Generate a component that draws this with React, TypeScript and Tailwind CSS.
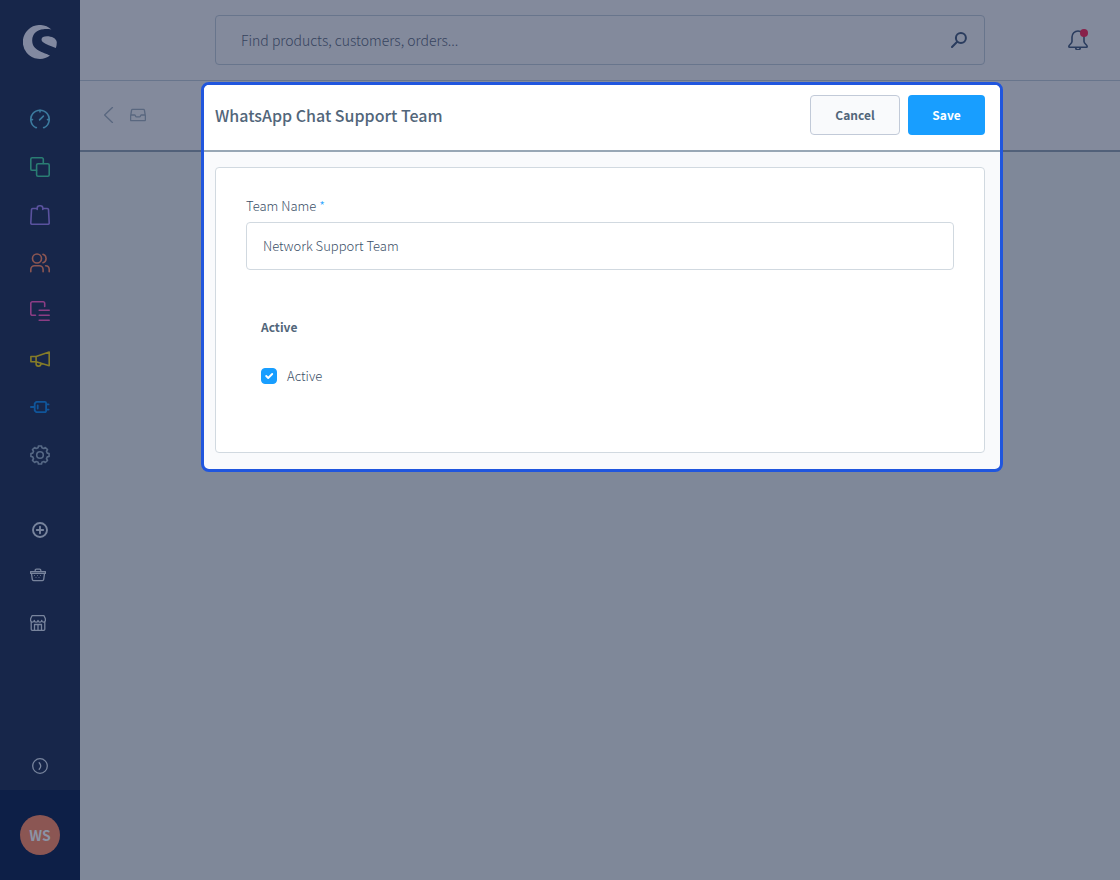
import type { ReactNode } from "react";
import { useState } from "react";

type IconProps = { className?: string; size?: "sm" | "md"; children: ReactNode };

function Icon({ className = "", size = "md", children }: IconProps) {
  const box = size === "sm" ? "size-4" : "size-5";
  return (
    <svg
      aria-hidden="true"
      viewBox={size === "sm" ? "0 0 16 16" : "0 0 20 20"}
      className={`${box} shrink-0 ${className}`}
      fill="none"
      stroke="currentColor"
      strokeWidth={size === "sm" ? 1.3 : 1.6}
      strokeLinecap="round"
      strokeLinejoin="round"
    >
      {children}
    </svg>
  );
}

const gearPath = (() => {
  const points: string[] = [];
  const teeth = 8;
  for (let i = 0; i < teeth; i++) {
    const base = (i * 2 * Math.PI) / teeth - Math.PI / 2;
    const steps: [number, number][] = [
      [-0.25, 7.5],
      [-0.17, 9.2],
      [0.17, 9.2],
      [0.25, 7.5],
    ];
    for (const [offset, radius] of steps) {
      const x = 10 + radius * Math.cos(base + offset);
      const y = 10 + radius * Math.sin(base + offset);
      points.push(`${x.toFixed(2)} ${y.toFixed(2)}`);
    }
  }
  return `M${points.join("L")}Z`;
})();

const mainNav = [
  {
    label: "Dashboard",
    color: "text-[#3c7a9e]",
    icon: (
      <>
        <path d="M6.400 18.600H5.800a9.200 9.200 0 1 1 8.400 0h-.6" />
        <path d="M9.600 10.900l3.800-3.800M10 1.300v1.600M.9 10.600h1.600M17.500 10.600h1.600" />
      </>
    ),
  },
  {
    label: "Catalogues",
    color: "text-[#2a7d73]",
    icon: (
      <>
        <path d="M6.500 13.300H2.200A1.400 1.400 0 0 1 .8 11.900V2.200A1.400 1.400 0 0 1 2.200.8h9.700a1.400 1.400 0 0 1 1.400 1.400v4.300" />
        <rect x="6.600" y="6.700" width="12.600" height="12.500" rx="1.400" />
      </>
    ),
  },
  {
    label: "Orders",
    color: "text-[#5a529e]",
    icon: (
      <path d="M5.600 3.500H2.700a1.200 1.200 0 0 0-1.200 1.100L.8 17.900a1.300 1.300 0 0 0 1.300 1.400h15.800a1.300 1.300 0 0 0 1.300-1.400l-.7-13.300a1.200 1.200 0 0 0-1.200-1.100h-2.900M7.200 4.500V3.200A2.400 2.400 0 0 1 9.600.8h.8a2.400 2.400 0 0 1 2.400 2.400v1.300M5.300 3.500h1.900M12.800 3.500h1.900" />
    ),
  },
  {
    label: "Customers",
    color: "text-[#8c5652]",
    icon: (
      <>
        <circle cx="7" cy="5.500" r="4.500" />
        <path d="M.8 18.700v-2.200a3.800 3.800 0 0 1 3.800-3.800h4.700a3.800 3.800 0 0 1 3.800 3.800v2.200M13 1.300a4.400 4.400 0 0 1 0 8.400M15.600 12.700a3.800 3.800 0 0 1 3.600 3.800v2.200" />
      </>
    ),
  },
  {
    label: "Content",
    color: "text-[#8b3d84]",
    icon: (
      <path d="M5.500 14.300H2.300A1.500 1.500 0 0 1 .8 12.800V2.300A1.500 1.500 0 0 1 2.300.8h10.900a1.500 1.500 0 0 1 1.500 1.500v3.200M9.200 9.300h10M9.200 14.300h10M9.200 19.200h10" />
    ),
  },
  {
    label: "Marketing",
    color: "text-[#857c28]",
    icon: (
      <path d="M.9 7.500h5.200l13.100-4.400v13.600L6.100 12.700H.9zM6.100 7.500v5.200M6.100 12.900v1.600a2.400 2.400 0 0 0 4.800.4v-.8" />
    ),
  },
  {
    label: "Extensions",
    color: "text-[#10559a]",
    icon: (
      <path strokeWidth="1.800" d="M.9 10h3.600M6.300 4.900h8.600a1.200 1.200 0 0 1 1.200 1.200v7.800a1.200 1.200 0 0 1-1.200 1.200H6.300L4.700 13.500V6.500zM16.300 7.400h2.300M16.300 12.600h2.300M7.700 8.400v3.200" />
    ),
  },
  {
    label: "Settings",
    color: "text-[#566885]",
    icon: (
      <>
        <path d={gearPath} />
        <circle cx="10" cy="10" r="3.300" />
      </>
    ),
  },
];

function Sidebar() {
  return (
    <aside className="flex w-20 shrink-0 flex-col bg-[#17264a]">
      <a href="#home" aria-label="Home" className="flex h-[95px] justify-center pt-[25px] text-[#8289a0]">
        <svg aria-hidden="true" viewBox="0 0 34 34" className="size-[34px]" fill="currentColor">
          <path d="M28.400 4.500A17 17 0 1 0 27 30.600C20.500 27 9.200 25.800 9.200 15.500 9.200 8.500 14 4.700 20.500 4.200c3-.2 5.600 0 7.900.3Z" />
          <path d="M33.800 17.200c0 2-.3 4-.9 5.800-2.300-1.300-6.500-2.300-9.900-4.100-2.500-1.300-4.500-2.400-4.500-4.500 0-2 2.300-3.200 5.500-3.200 4.600 0 9.400 2 9.800 6Z" />
        </svg>
      </a>
      <nav aria-label="Main" className="flex flex-col">
        {mainNav.map((item) => (
          <a
            key={item.label}
            href={`#${item.label.toLowerCase()}`}
            aria-label={item.label}
            className={`flex h-12 items-center justify-center ${item.color}`}
          >
            <Icon>{item.icon}</Icon>
          </a>
        ))}
      </nav>
      <nav aria-label="Sales channels" className="mt-[30px] flex flex-col text-[#78849d]">
        <button type="button" aria-label="Add sales channel" className="flex h-[42px] items-center justify-center">
          <Icon size="sm">
            <g strokeWidth="1.900">
              <circle cx="8" cy="8" r="7" />
              <path d="M8 4.800v6.400M4.800 8h6.400" />
            </g>
          </Icon>
        </button>
        <a href="#storefront" aria-label="Storefront" className="flex h-12 items-center pl-[30px]">
          <Icon size="sm">
            <path d="M.6 4.600h14.800v1.800H.6zM1.500 6.600l.8 5.800a1.400 1.400 0 0 0 1.400 1.200h8.600a1.400 1.400 0 0 0 1.400-1.200l.8-5.800M5.200 4.500V3.300A1.200 1.200 0 0 1 6.400 2.100h3.200a1.200 1.200 0 0 1 1.200 1.200v1.200" />
            <path strokeDasharray="1 2" strokeWidth="1" strokeLinecap="butt" opacity=".7" d="M4 8.500h9M5.500 10.500h6" />
          </Icon>
        </a>
        <a href="#shop" aria-label="Shop" className="flex h-12 items-center pl-[30px]">
          <Icon size="sm">
            <path d="M2 .7h12l1.400 3v1.500a1.800 1.800 0 0 1-3.700.1 1.850 1.850 0 0 1-3.700 0 1.850 1.850 0 0 1-3.700 0A1.800 1.800 0 0 1 .6 5.200V3.700zM1.200 7v7.200a1.100 1.100 0 0 0 1.100 1.100h11.400a1.100 1.100 0 0 0 1.100-1.100V7M4.500 15.200V9.500h7v5.700M8 9.500v5.700" />
          </Icon>
        </a>
      </nav>
      <button type="button" aria-label="Expand menu" className="mt-auto flex h-12 items-center justify-center text-[#78849d]">
        <Icon size="sm">
          <circle cx="8" cy="8" r="7.300" />
          <path d="M7.200 4.800C9.300 7 9.300 9 7.200 11.200" />
        </Icon>
      </button>
      <div className="flex h-[90px] items-center justify-center bg-[#0d1f47]">
        <button type="button" aria-label="User menu" className="size-10 rounded-full bg-[#8b5653] text-sm font-bold text-[#8b93a5]">
          WS
        </button>
      </div>
    </aside>
  );
}

function TopBar() {
  return (
    <header className="flex h-[81px] items-center border-b border-[#68758c] bg-[#838a9c] pr-8 pl-[135px]">
      <form role="search" className="flex h-[50px] flex-1 items-center rounded border border-[#68758c] pr-[17px] pl-[25px]">
        <input
          type="search"
          aria-label="Search"
          placeholder="Find products, customers, orders..."
          className="min-w-0 flex-1 bg-transparent text-sm font-light text-[#36435e] outline-none placeholder:text-[#36435e]"
        />
        <button type="submit" aria-label="Run search" className="text-[#2a3c5e]">
          <Icon size="sm">
            <g strokeWidth="2">
              <circle cx="9.900" cy="6" r="5" />
              <path d="M6.200 9.700L1 15" />
            </g>
          </Icon>
        </button>
      </form>
      <button type="button" aria-label="Notifications" className="relative ml-[83px] text-[#2a3c5e]">
        <Icon>
          <path d="M10 1A6 6 0 0 0 4 7v4.500c0 2-3.200 3.300-3.200 5 0 .5.400.8.900.8h16.600c.5 0 .9-.3.900-.8 0-1.700-3.200-3-3.200-5V7a6 6 0 0 0-6-6ZM7.700 17.600a2.300 2.300 0 0 0 4.600 0" />
        </Icon>
        <span className="absolute -top-px right-0 size-2 rounded-full bg-[#88214a]" />
      </button>
    </header>
  );
}

function SmartBar() {
  return (
    <div className="flex h-[71px] items-center border-b-2 border-[#516079] bg-[#838a9c] pb-0.5 pl-6 text-[#59677f]">
      <a href="#back" aria-label="Back">
        <svg aria-hidden="true" viewBox="0 0 10 16" className="h-4 w-2.5" fill="none" stroke="currentColor" strokeWidth="1.300" strokeLinecap="round" strokeLinejoin="round">
          <path d="M8.400.5L.6 8l7.800 7.500" />
        </svg>
      </a>
      <Icon size="sm" className="ml-4">
        <path d="M2.600 2.400h10.800a1 1 0 0 1 1 .8l1 6v3.700a.8.800 0 0 1-.8.800H1.400a.8.800 0 0 1-.8-.8V9.200l1-6a1 1 0 0 1 1-.8ZM.7 8h3.700a1 1 0 0 1 .9.600l.3.700a1 1 0 0 0 .9.600h3a1 1 0 0 0 .9-.6l.3-.7a1 1 0 0 1 .9-.6h3.700" />
      </Icon>
    </div>
  );
}

function TeamModal() {
  const [name, setName] = useState("Network Support Team");
  const [active, setActive] = useState(true);

  return (
    <section
      role="dialog"
      aria-labelledby="team-title"
      className="flex-1 overflow-hidden rounded-lg border-3 border-[#2056de] bg-[#f9fafc] text-[#52667a]"
    >
      <div className="flex h-[67px] items-start gap-2 border-b-2 border-[#98a7b5] bg-white pt-2.5 pr-[15px] pl-[11px]">
        <h1 id="team-title" className="flex-1 text-base leading-10 font-medium">
          WhatsApp Chat Support Team
        </h1>
        <button type="button" className="h-10 w-[90px] rounded border border-[#c2cad8] bg-[#f9fafc] text-xs font-bold">
          Cancel
        </button>
        <button type="button" className="h-10 w-[77px] rounded bg-[#189eff] text-xs font-bold text-white">
          Save
        </button>
      </div>
      <div className="pt-[15px] pr-[15px] pb-4 pl-[11px]">
        <form className="rounded border border-[#d1d9e0] bg-white px-[30px] pt-[30px] pb-[68px] text-[13px] leading-4 font-light text-[#3c5068]">
          <label htmlFor="team-name" className="block">
            Team Name <span className="text-[#189eff]">*</span>
          </label>
          <input
            id="team-name"
            value={name}
            onChange={(event) => setName(event.target.value)}
            className="mt-2 block h-12 w-full rounded border border-[#d1d9e0] bg-white px-4 pb-0.5 outline-none"
          />
          <fieldset className="mt-[49px] pl-[15px]">
            <legend className="text-xs leading-4 font-bold text-[#52667a]">Active</legend>
            <div className="mt-[33px] flex items-center gap-2.5">
              <span className="relative flex size-4">
                <input
                  id="team-active"
                  type="checkbox"
                  checked={active}
                  onChange={(event) => setActive(event.target.checked)}
                  className="size-4 appearance-none rounded border border-[#d1d9e0] checked:border-[#189eff] checked:bg-[#189eff]"
                />
                {active && (
                  <svg aria-hidden="true" viewBox="0 0 16 16" className="pointer-events-none absolute inset-0 size-4" fill="none" stroke="white" strokeWidth="1.900" strokeLinecap="round" strokeLinejoin="round">
                    <path d="M5.200 8l2 2 4-4" />
                  </svg>
                )}
              </span>
              <label htmlFor="team-active">Active</label>
            </div>
          </fieldset>
        </form>
      </div>
    </section>
  );
}

export default function App() {
  return (
    <div className="flex min-h-screen bg-[#7f8899] font-['Noto_Sans_CJK_SC',sans-serif]">
      <Sidebar />
      <main className="relative min-w-0 flex-1">
        <TopBar />
        <SmartBar />
        <div className="absolute inset-x-0 top-0 flex pt-[82px] pr-[117px] pl-[121px]">
          <TeamModal />
        </div>
      </main>
    </div>
  );
}
